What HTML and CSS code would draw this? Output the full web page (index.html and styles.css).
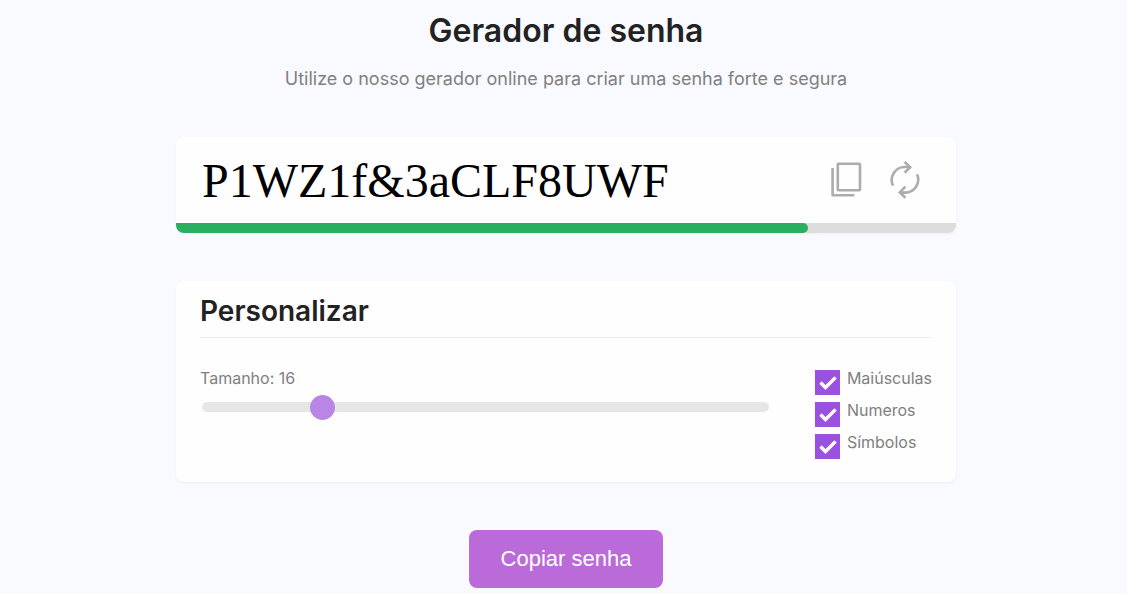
FILE: index.html
```html
<!DOCTYPE html>
<html lang="pt-BR">
<head>
<meta charset="utf-8">
<meta name="viewport" content="width=device-width, initial-scale=1">
<title>Gerador de senha</title>
<link rel="stylesheet" href="styles.css">
</head>
<body>
<main class="page">
  <header class="intro">
    <h1 class="title">Gerador de senha</h1>
    <p class="subtitle">Utilize o nosso gerador online para criar uma senha forte e segura</p>
  </header>

  <section class="card password">
    <div class="password-row">
      <input class="password-text" type="text" value="P1WZ1f&amp;3aCLF8UWF" aria-label="Senha" readonly>
      <div class="actions">
        <button class="icon-button" type="button" aria-label="Copiar">
          <svg width="32" height="38" viewBox="0 0 32 38" fill="none" stroke="#acacac" stroke-width="2.6" stroke-linejoin="round">
            <rect x="7.8" y="2.8" width="22.2" height="26.4" rx=".6"/>
            <path d="M2.6 7v27.2H24.4"/>
          </svg>
        </button>
        <button class="icon-button" type="button" aria-label="Gerar nova senha">
          <svg width="30" height="38" viewBox="0 0 30 38" fill="none" stroke="#acacac" stroke-width="2.6">
            <path d="M3 24.6A13 13 0 0 1 15 6h5"/>
            <path d="M14.6 .9l5.6 5.3-5.6 5.5"/>
            <path d="M27 13.2A13 13 0 0 1 15 31.6h-5"/>
            <path d="M15.4 25.6l-5.6 5.8 5.6 5.4"/>
          </svg>
        </button>
      </div>
    </div>
    <div class="strength"><div class="strength-bar" style="width: 81%"></div></div>
  </section>

  <section class="card options">
    <h2 class="options-title">Personalizar</h2>
    <div class="options-body">
      <div class="length">
        <label class="label" for="length">Tamanho: 16</label>
        <input class="slider" id="length" type="range" min="4" max="64" value="16">
      </div>
      <div class="checks">
        <label class="check"><input class="check-box" type="checkbox" checked><span>Maiúsculas</span></label>
        <label class="check"><input class="check-box" type="checkbox" checked><span>Numeros</span></label>
        <label class="check"><input class="check-box" type="checkbox" checked><span>Símbolos</span></label>
      </div>
    </div>
  </section>

  <button class="submit" type="button">Copiar senha</button>
</main>
</body>
</html>
```

FILE: styles.css
```css
* {
  box-sizing: border-box;
}

body {
  margin: 0;
  background: #f9faff;
  color: #222;
  font-family: Inter, "Liberation Sans", sans-serif;
}

.page {
  display: flex;
  flex-direction: column;
  align-items: center;
  gap: 48px;
  padding: 11px 16px 6px 21px;
}

.intro {
  text-align: center;
}

.title {
  margin: 0 0 18px;
  font-size: 32px;
  line-height: 40px;
  font-weight: 600;
}

.subtitle {
  margin: 0;
  color: #808080;
  font-size: 18px;
  line-height: 20px;
}

.card {
  width: 100%;
  max-width: 780px;
  background: #fefefe;
  border-radius: 8px;
  box-shadow: 0 1px 3px rgba(0, 0, 0, 0.05);
}

.password {
  overflow: hidden;
}

.password-row {
  display: flex;
  align-items: center;
  padding: 16px 36px 16px 26px;
}

.password-text {
  flex: 1;
  min-width: 0;
  height: 54px;
  padding: 0;
  border: 0;
  outline: 0;
  background: transparent;
  color: #000;
  font-family: "Liberation Serif", serif;
  font-size: 48px;
}

.actions {
  display: flex;
  align-items: center;
  gap: 28px;
}

.icon-button {
  display: flex;
  padding: 0;
  border: 0;
  background: none;
}

.strength {
  height: 10px;
  background: #ddd;
}

.strength-bar {
  height: 10px;
  border-radius: 0 5px 5px 0;
  background: #2aae60;
}

.options {
  padding: 12px 24px 20px;
}

.options-title {
  margin: 0 0 28px;
  padding-bottom: 8px;
  border-bottom: 1px solid #eee;
  font-size: 28px;
  line-height: 36px;
  font-weight: 600;
}

.options-body {
  display: flex;
  gap: 44px;
  color: #808080;
  font-size: 16px;
  line-height: 24px;
}

.length {
  display: flex;
  flex: 1;
  flex-direction: column;
  gap: 12px;
}

.slider {
  height: 10px;
  margin: 0 2px;
  border-radius: 5px;
  background: #e6e6e6;
  appearance: none;
}

.slider::-webkit-slider-thumb {
  width: 25px;
  height: 25px;
  border-radius: 50%;
  background: #b986e8;
  appearance: none;
}

.checks {
  display: flex;
  flex-direction: column;
}

.check {
  display: flex;
  gap: 7px;
  height: 32px;
}

.check-box {
  width: 25px;
  height: 25px;
  margin: 4px 0 0;
  background: #9b51e0 url("data:image/svg+xml,%3Csvg xmlns='http://www.w3.org/2000/svg' viewBox='0 0 25 25'%3E%3Cpath d='M5.5 12.5l5 5L20.6 7.4' fill='none' stroke='white' stroke-width='3.4'/%3E%3C/svg%3E") center / 25px no-repeat;
  appearance: none;
}

.submit {
  padding: 16px 32px;
  border: 0;
  border-radius: 8px;
  background: #bb6bd9;
  color: #fff;
  font-family: "Liberation Sans", Arial, sans-serif;
  font-size: 22px;
  line-height: 26px;
}
```
